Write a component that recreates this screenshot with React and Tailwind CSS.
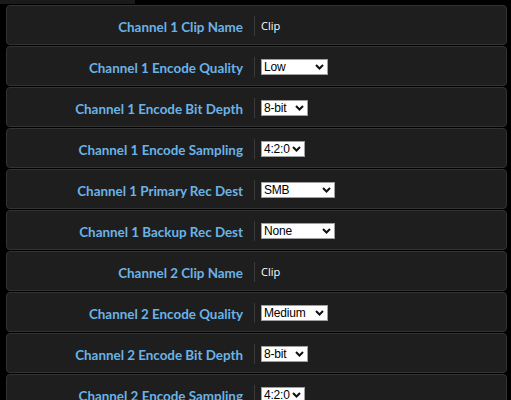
import React from 'react';

const rows = [
  { label: 'Channel 1 Clip Name', text: 'Clip' },
  { label: 'Channel 1 Encode Quality', value: 'Low', w: 'w-[67px]' },
  { label: 'Channel 1 Encode Bit Depth', value: '8-bit', w: 'w-[47px]' },
  { label: 'Channel 1 Encode Sampling', value: '4:2:0', w: 'w-[44px]' },
  { label: 'Channel 1 Primary Rec Dest', value: 'SMB', w: 'w-[74px]' },
  { label: 'Channel 1 Backup Rec Dest', value: 'None', w: 'w-[74px]' },
  { label: 'Channel 2 Clip Name', text: 'Clip' },
  { label: 'Channel 2 Encode Quality', value: 'Medium', w: 'w-[67px]' },
  { label: 'Channel 2 Encode Bit Depth', value: '8-bit', w: 'w-[47px]' },
  { label: 'Channel 2 Encode Sampling', value: '4:2:0', w: 'w-[44px]' },
];

const Chevron = () => (
  <svg width="9" height="6" viewBox="0 0 9 6" className="shrink-0">
    <path d="M1 1 L4.5 4.5 L8 1" fill="none" stroke="#111" strokeWidth="2" />
  </svg>
);

const Select = ({ value, w }) => (
  <div className={`${w} h-[16px] bg-white border border-[#a0a0a0] flex items-center justify-between pl-[2px] pr-[3px] text-[12px] leading-none text-black font-['Liberation_Sans',Arial,sans-serif]`}>
    <span className="tracking-[-0.2px]">{value}</span>
    <Chevron />
  </div>
);

export default function App() {
  return (
    <div className="w-[511px] h-[400px] bg-black overflow-hidden">
      <div className="h-[4px] w-[135px] bg-[#1a1a1a]" />
      <div className="flex flex-col gap-[1px] pl-[6px] pr-[4px] pt-[1px]">
        {rows.map((row, i) => (
          <div
            key={i}
            className="h-[40px] shrink-0 flex items-center bg-[#1e1e1e] border border-[#333333] rounded-[4px]"
          >
            <div className="w-[236px] pt-[4px] text-right text-[13.4px] font-bold text-[#6bb3e6] font-['Lato','Open_Sans',sans-serif]">
              {row.label}
            </div>
            <div className="ml-[11px] mt-[2px] h-[20px] border-l border-[#3a3a3a] pl-[6px] flex items-center">
              {row.text ? (
                <span className="text-[11px] text-white font-['Open_Sans',sans-serif]">{row.text}</span>
              ) : (
                <Select value={row.value} w={row.w} />
              )}
            </div>
          </div>
        ))}
      </div>
    </div>
  );
}
